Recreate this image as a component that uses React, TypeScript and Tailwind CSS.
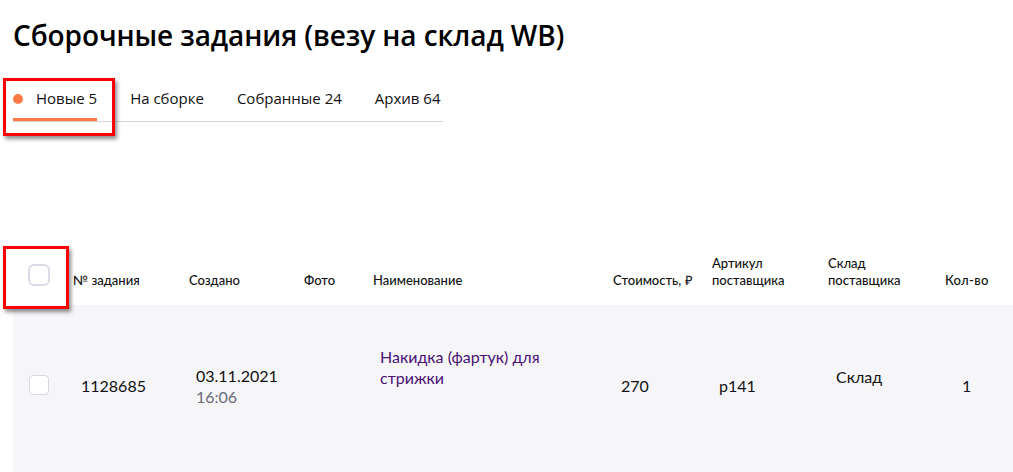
import React from "react";

const tabs = [
  { label: "Новые 5", active: true },
  { label: "На сборке" },
  { label: "Собранные 24" },
  { label: "Архив 64" },
];

const cols = "grid grid-cols-[60px_116px_115px_69px_240px_99px_116px_117px_1fr]";

function RedFrame({ className }: { className: string }) {
  return (
    <div
      className={`pointer-events-none absolute border-[3px] border-[#ff0000] shadow-[2px_3px_4px_rgba(0,0,0,0.45)] ${className}`}
    />
  );
}

export default function App() {
  return (
    <div className="h-[472px] overflow-hidden bg-white pt-[17px] text-[#000]">
      <h1 className="ml-[13px] font-['Open_Sans',sans-serif] text-[28px] font-semibold leading-[36px] tracking-[-0.1px]">
        Сборочные задания (везу на склад WB)
      </h1>

      <div className="relative ml-[13px] mt-[23px] w-[430px]">
        <RedFrame className="-left-[10px] top-[2px] h-[58px] w-[112px]" />
        <div className="flex gap-[33px] whitespace-nowrap border-b border-[#d6d6d6] font-['Open_Sans',sans-serif] text-[15px] text-[#111]">
          {tabs.map((t) => (
            <div
              key={t.label}
              className={`flex h-[45px] shrink-0 items-center gap-[13px] ${
                t.active ? "-mb-px border-b-[3px] border-[#ff7a45] pt-[3px]" : ""
              }`}
            >
              {t.active && <span className="h-[10px] w-[10px] rounded-full bg-[#ff7a45]" />}
              <span>{t.label}</span>
            </div>
          ))}
        </div>
      </div>

      <div className="mt-[128px] font-['Lato',sans-serif]">
        <div className={`${cols} relative ml-[13px] h-[55px] items-end pb-[16px] text-[13px] font-medium leading-[17px] text-[#111]`}>
          <RedFrame className="-left-[10px] -top-[4px] h-[63px] w-[66px]" />
          <div className="mb-[3px] ml-[15px] h-[22px] w-[22px] rounded-[6px] border-2 border-[#dadbea] bg-white" />
          <div>№ задания</div>
          <div>Создано</div>
          <div>Фото</div>
          <div>Наименование</div>
          <div>Стоимость, ₽</div>
          <div>
            Артикул
            <br />
            поставщика
          </div>
          <div>
            Склад
            <br />
            поставщика
          </div>
          <div className="tracking-[0.3px]">Кол-во</div>
        </div>

        <div className={`${cols} ml-[13px] h-[200px] items-start bg-[#f6f6f9] pt-[41px] text-[16px] leading-[21px] text-[#111]`}>
          <div className="ml-[16px] mt-[29px] h-[20px] w-[20px] rounded-[4px] border border-[#d8d8de] bg-white" />
          <div className="mt-[29px] pl-[8px]">1128685</div>
          <div className="mt-[19px] pl-[7px]">
            <div>03.11.2021</div>
            <div className="text-[#6b6b78]">16:06</div>
          </div>
          <div />
          <div className="pl-[7px] text-[#481173]">
            Накидка (фартук) для
            <br />
            стрижки
          </div>
          <div className="mt-[29px] pl-[8px]">270</div>
          <div className="mt-[29px] pl-[7px]">p141</div>
          <div className="mt-[20px] pl-[8px]">Склад</div>
          <div className="mt-[29px] pl-[17px]">1</div>
        </div>
      </div>
    </div>
  );
}
